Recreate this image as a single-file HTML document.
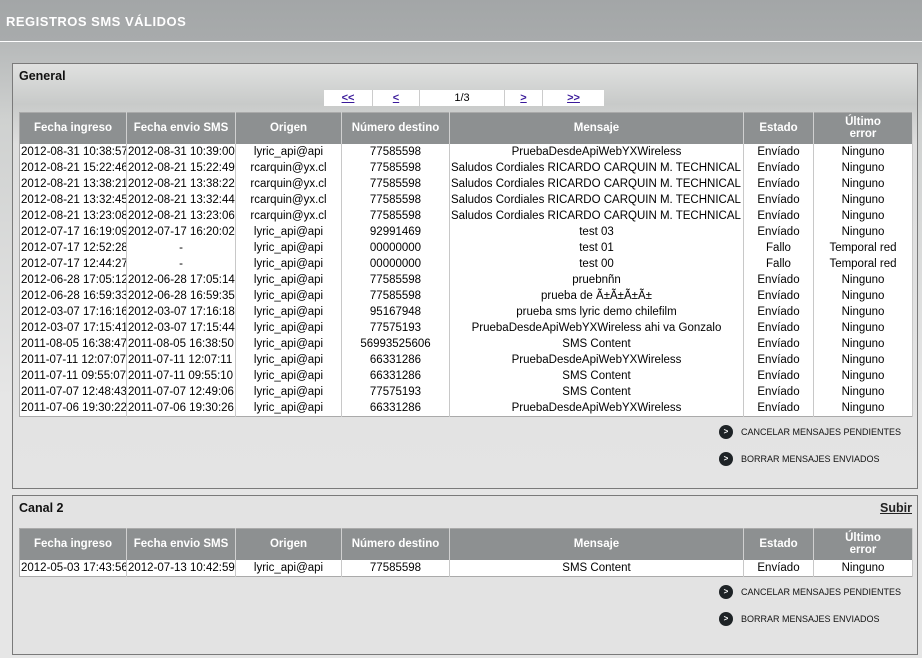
<!DOCTYPE html><html><head><meta charset="utf-8"><style>
*{margin:0;padding:0;box-sizing:border-box}
body{width:922px;height:658px;overflow:hidden;font-family:"Liberation Sans",sans-serif;background:linear-gradient(#a9acad,#cfd1d0 120px,#e6e6e6 400px,#e6e6e6);position:relative}
.top{position:absolute;left:0;top:0;width:922px;height:42px;background:linear-gradient(#a3a6a7,#a8abac);border-bottom:1px solid #fff}
.top span{position:absolute;left:6px;top:14px;color:#fff;font-weight:bold;font-size:13px;letter-spacing:.5px}
.panel{position:absolute;left:12px;width:906px;border:1px solid #7a7a7a;background:linear-gradient(#e0e1e0,#c8cac9 40px,#dedede 80px,#e4e4e4)}
.ttl{position:absolute;left:6px;top:5px;font-weight:bold;font-size:12.5px;color:#111}
table{position:absolute;left:6px;border-collapse:collapse;table-layout:fixed;font-size:11.5px;background:#fff;border:1px solid #aaa}
th{background:#8d9091;color:#fff;font-weight:bold;font-size:11.5px;border-right:1px solid #d0d0d0;line-height:12px;height:31px}
td{text-align:center;border-right:1px solid #c8c8c8;height:16px;line-height:16px;white-space:nowrap;overflow:hidden;color:#000}
td.l{text-align:left;padding-left:1px}
.pg{position:absolute;left:311px;top:26px;height:16px;display:flex;font-size:11px}
.pg div{background:#fff;text-align:center;line-height:16px;border-right:1px solid #ccc}
.pg a{color:#3a1a9a;text-decoration:underline;font-weight:bold}
.btn{position:absolute;font-size:9px;color:#111;display:flex;align-items:center}
.btn i{display:inline-block;width:14px;height:14px;border-radius:7px;background:#1e2326;color:#fff;font-style:normal;font-size:8px;font-weight:bold;text-align:center;line-height:14px;margin-right:8px}
</style></head><body>
<div class="top"><span>REGISTROS SMS VÁLIDOS</span></div>
<div class="panel" style="top:63px;height:426px">
<div class="ttl">General</div>
<div class="pg"><div style="width:49px"><a>&lt;&lt;</a></div><div style="width:47px"><a>&lt;</a></div><div style="width:85px">1/3</div><div style="width:38px"><a>&gt;</a></div><div style="width:61px;border:0"><a>&gt;&gt;</a></div></div>
<table style="top:48px;width:893px">
<colgroup><col style="width:107px"><col style="width:109px"><col style="width:106px"><col style="width:108px"><col style="width:294px"><col style="width:70px"><col style="width:99px"></colgroup>
<tr><th>Fecha ingreso</th><th>Fecha envio SMS</th><th>Origen</th><th>Número destino</th><th>Mensaje</th><th>Estado</th><th>Último<br>error</th></tr>
<tr><td class="l">2012-08-31 10:38:57</td><td class="l">2012-08-31 10:39:00</td><td>lyric_api@api</td><td>77585598</td><td>PruebaDesdeApiWebYXWireless</td><td>Envíado</td><td>Ninguno</td></tr>
<tr><td class="l">2012-08-21 15:22:46</td><td class="l">2012-08-21 15:22:49</td><td>rcarquin@yx.cl</td><td>77585598</td><td class="l">Saludos Cordiales RICARDO CARQUIN M. TECHNICAL ...</td><td>Envíado</td><td>Ninguno</td></tr>
<tr><td class="l">2012-08-21 13:38:21</td><td class="l">2012-08-21 13:38:22</td><td>rcarquin@yx.cl</td><td>77585598</td><td class="l">Saludos Cordiales RICARDO CARQUIN M. TECHNICAL ...</td><td>Envíado</td><td>Ninguno</td></tr>
<tr><td class="l">2012-08-21 13:32:45</td><td class="l">2012-08-21 13:32:44</td><td>rcarquin@yx.cl</td><td>77585598</td><td class="l">Saludos Cordiales RICARDO CARQUIN M. TECHNICAL ...</td><td>Envíado</td><td>Ninguno</td></tr>
<tr><td class="l">2012-08-21 13:23:08</td><td class="l">2012-08-21 13:23:06</td><td>rcarquin@yx.cl</td><td>77585598</td><td class="l">Saludos Cordiales RICARDO CARQUIN M. TECHNICAL ...</td><td>Envíado</td><td>Ninguno</td></tr>
<tr><td class="l">2012-07-17 16:19:09</td><td class="l">2012-07-17 16:20:02</td><td>lyric_api@api</td><td>92991469</td><td>test 03</td><td>Envíado</td><td>Ninguno</td></tr>
<tr><td class="l">2012-07-17 12:52:28</td><td>-</td><td>lyric_api@api</td><td>00000000</td><td>test 01</td><td>Fallo</td><td>Temporal red</td></tr>
<tr><td class="l">2012-07-17 12:44:27</td><td>-</td><td>lyric_api@api</td><td>00000000</td><td>test 00</td><td>Fallo</td><td>Temporal red</td></tr>
<tr><td class="l">2012-06-28 17:05:12</td><td class="l">2012-06-28 17:05:14</td><td>lyric_api@api</td><td>77585598</td><td>pruebnñn</td><td>Envíado</td><td>Ninguno</td></tr>
<tr><td class="l">2012-06-28 16:59:33</td><td class="l">2012-06-28 16:59:35</td><td>lyric_api@api</td><td>77585598</td><td>prueba de Ã±Ã±Ã±Ã±</td><td>Envíado</td><td>Ninguno</td></tr>
<tr><td class="l">2012-03-07 17:16:16</td><td class="l">2012-03-07 17:16:18</td><td>lyric_api@api</td><td>95167948</td><td>prueba sms lyric demo chilefilm</td><td>Envíado</td><td>Ninguno</td></tr>
<tr><td class="l">2012-03-07 17:15:41</td><td class="l">2012-03-07 17:15:44</td><td>lyric_api@api</td><td>77575193</td><td>PruebaDesdeApiWebYXWireless ahi va Gonzalo</td><td>Envíado</td><td>Ninguno</td></tr>
<tr><td class="l">2011-08-05 16:38:47</td><td class="l">2011-08-05 16:38:50</td><td>lyric_api@api</td><td>56993525606</td><td>SMS Content</td><td>Envíado</td><td>Ninguno</td></tr>
<tr><td class="l">2011-07-11 12:07:07</td><td class="l">2011-07-11 12:07:11</td><td>lyric_api@api</td><td>66331286</td><td>PruebaDesdeApiWebYXWireless</td><td>Envíado</td><td>Ninguno</td></tr>
<tr><td class="l">2011-07-11 09:55:07</td><td class="l">2011-07-11 09:55:10</td><td>lyric_api@api</td><td>66331286</td><td>SMS Content</td><td>Envíado</td><td>Ninguno</td></tr>
<tr><td class="l">2011-07-07 12:48:43</td><td class="l">2011-07-07 12:49:06</td><td>lyric_api@api</td><td>77575193</td><td>SMS Content</td><td>Envíado</td><td>Ninguno</td></tr>
<tr><td class="l">2011-07-06 19:30:22</td><td class="l">2011-07-06 19:30:26</td><td>lyric_api@api</td><td>66331286</td><td>PruebaDesdeApiWebYXWireless</td><td>Envíado</td><td>Ninguno</td></tr>
</table>
<div class="btn" style="left:706px;top:361px"><i>&gt;</i>CANCELAR MENSAJES PENDIENTES</div>
<div class="btn" style="left:706px;top:388px"><i>&gt;</i>BORRAR MENSAJES ENVIADOS</div>
</div>
<div class="panel" style="top:495px;height:160px;background:#e3e3e3">
<div class="ttl">Canal 2</div>
<div style="position:absolute;right:5px;top:5px;font-weight:bold;font-size:12.5px;text-decoration:underline;color:#222">Subir</div>
<table style="top:32px;width:893px">
<colgroup><col style="width:107px"><col style="width:109px"><col style="width:106px"><col style="width:108px"><col style="width:294px"><col style="width:70px"><col style="width:99px"></colgroup>
<tr><th>Fecha ingreso</th><th>Fecha envio SMS</th><th>Origen</th><th>Número destino</th><th>Mensaje</th><th>Estado</th><th>Último<br>error</th></tr>
<tr><td class="l">2012-05-03 17:43:56</td><td class="l">2012-07-13 10:42:59</td><td>lyric_api@api</td><td>77585598</td><td>SMS Content</td><td>Envíado</td><td>Ninguno</td></tr>
</table>
<div class="btn" style="left:706px;top:89px"><i>&gt;</i>CANCELAR MENSAJES PENDIENTES</div>
<div class="btn" style="left:706px;top:116px"><i>&gt;</i>BORRAR MENSAJES ENVIADOS</div>
</div>
</body></html>
